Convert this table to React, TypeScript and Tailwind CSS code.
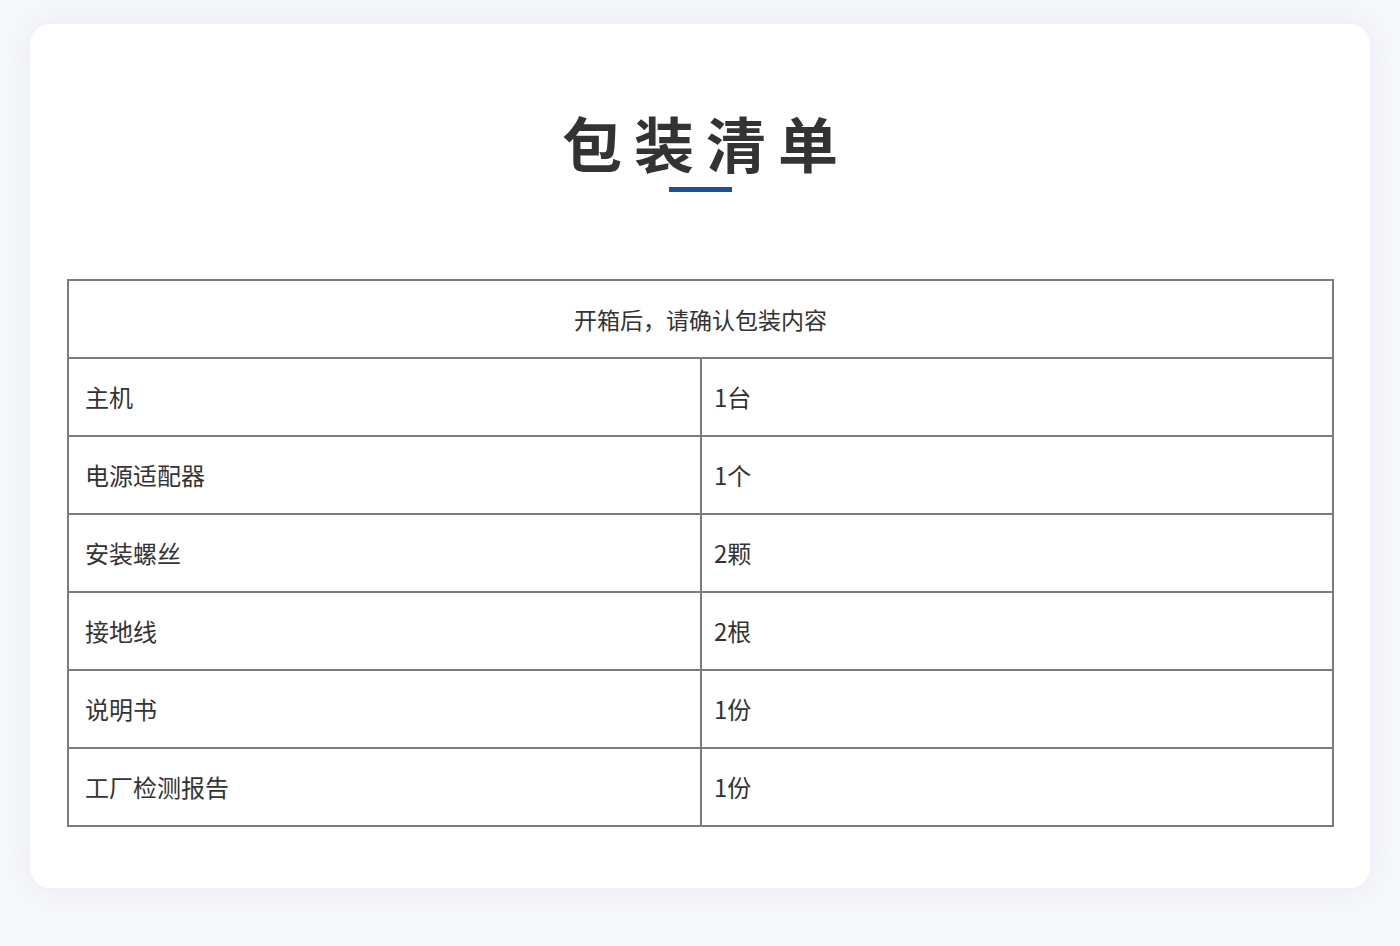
const rows: [string, string][] = [
  ['主机', '1台'],
  ['电源适配器', '1个'],
  ['安装螺丝', '2颗'],
  ['接地线', '2根'],
  ['说明书', '1份'],
  ['工厂检测报告', '1份'],
];

const font = { fontFamily: '"Noto Sans CJK SC", "Noto Sans", sans-serif' };

export default function App() {
  return (
    <div className="min-h-[946px] w-[1400px] bg-[#f7f8fb] pt-[24px]" style={font}>
      <div className="mx-[30px] h-[864px] rounded-[20px] bg-white pt-[88px] shadow-[0_0_30px_rgba(220,225,238,0.6)]">
        <h1 className="text-center text-[60px] font-bold leading-[60px] tracking-[12px] text-[#333] pl-[12px]">
          包装清单
        </h1>
        <div className="mx-auto mt-[15px] h-[5px] w-[63px] bg-[#1a4fa8]" />
        <table className="ml-[37px] mt-[87px] w-[1267px] border-collapse text-[#333]">
          <thead>
            <tr>
              <th
                colSpan={2}
                className="h-[78px] border-2 border-[#7c7c7c] text-center text-[23px] font-normal"
              >
                开箱后，请确认包装内容
              </th>
            </tr>
          </thead>
          <tbody>
            {rows.map(([name, qty]) => (
              <tr key={name}>
                <td className="h-[78px] w-[633px] border-2 border-[#7c7c7c] pl-[16px] text-[24px]">{name}</td>
                <td className="h-[78px] border-2 border-[#7c7c7c] pl-[12px] text-[24px]">{qty}</td>
              </tr>
            ))}
          </tbody>
        </table>
      </div>
    </div>
  );
}
